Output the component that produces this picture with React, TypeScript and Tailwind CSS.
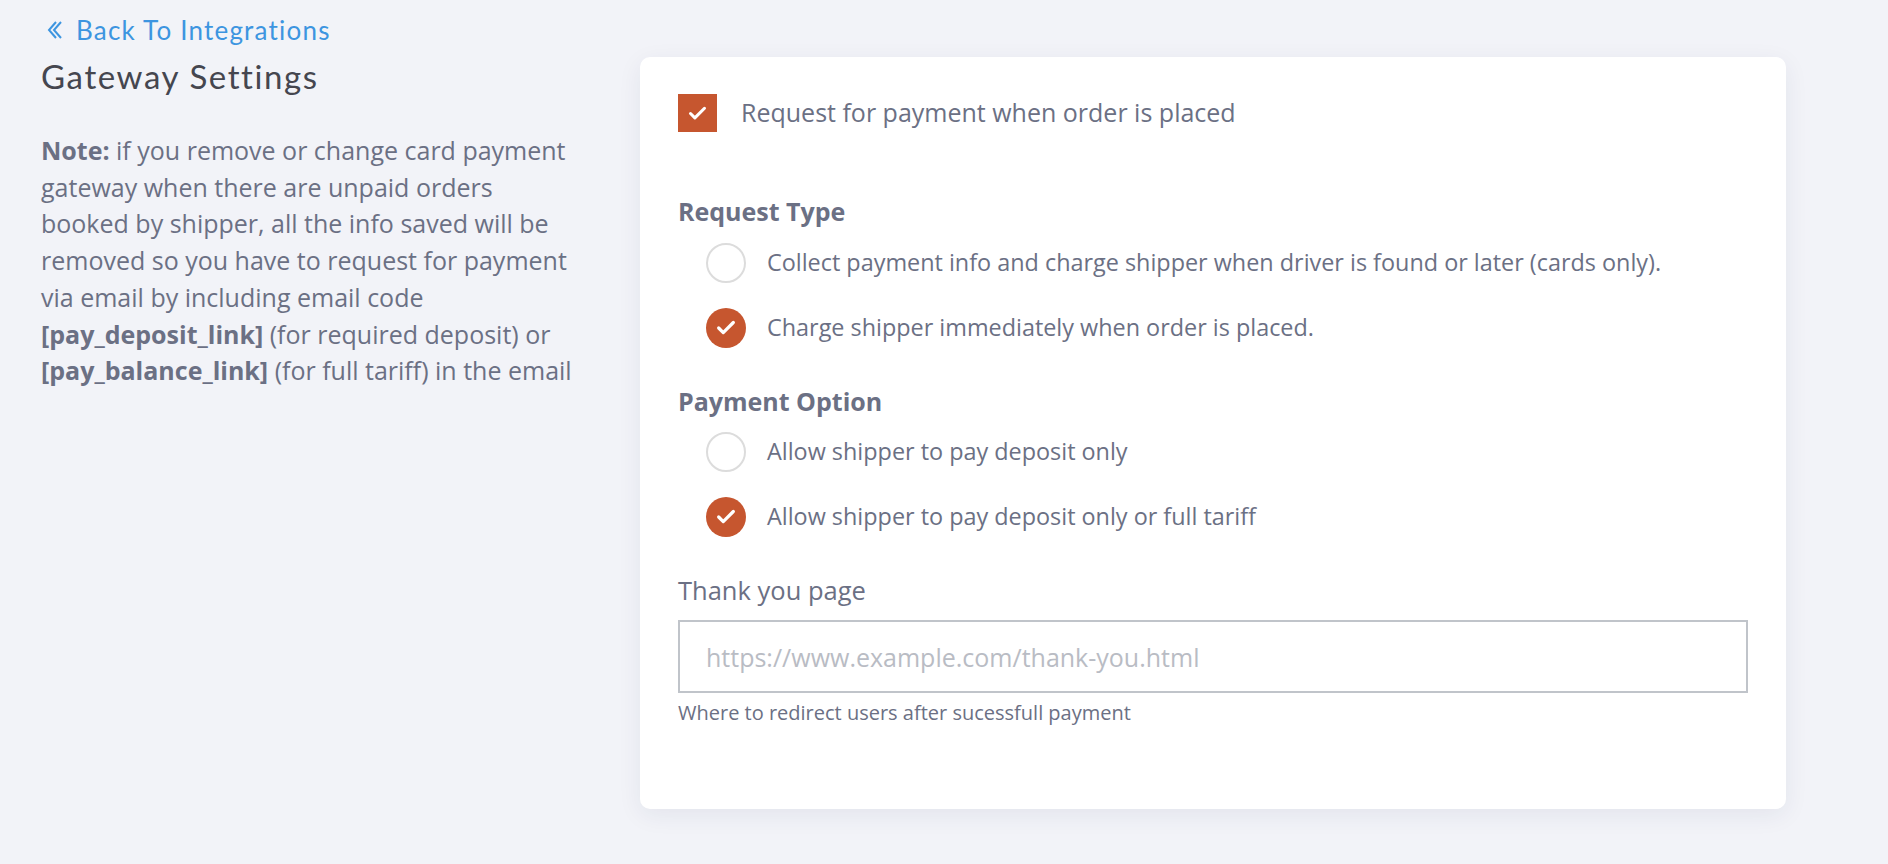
import { Check } from "lucide-react";

type Option = { label: string; checked: boolean };

const requestTypes: Option[] = [
  { label: "Collect payment info and charge shipper when driver is found or later (cards only).", checked: false },
  { label: "Charge shipper immediately when order is placed.", checked: true },
];

const paymentOptions: Option[] = [
  { label: "Allow shipper to pay deposit only", checked: false },
  { label: "Allow shipper to pay deposit only or full tariff", checked: true },
];

function Radio({ option, className }: { option: Option; className: string }) {
  return (
    <div className={`flex items-center h-[40px] pl-[28px] ${className}`}>
      {option.checked ? (
        <span className="w-[40px] h-[40px] rounded-full bg-[#c6562f] flex items-center justify-center shrink-0">
          <Check className="w-[22px] h-[22px] text-white" strokeWidth={3.5} />
        </span>
      ) : (
        <span className="w-[40px] h-[40px] rounded-full border-2 border-[#dcdcdc] bg-white shrink-0" />
      )}
      <span className="ml-[21px] text-[23.4px] text-[#6b7084]">{option.label}</span>
    </div>
  );
}

export default function App() {
  return (
    <div className="min-h-screen bg-[#f2f3f8] flex pl-[41px] font-['Open_Sans',sans-serif]">
      {/* Left column */}
      <div className="w-[560px] shrink-0 pt-[14px]">
        <a href="#" className="flex items-center h-[32px] leading-[32px] ml-[6px] text-[#3d95e0] text-[26px] tracking-[1.2px] font-['Lato',sans-serif]">
          <svg width="18" height="20" viewBox="0 0 18 20" fill="none" stroke="currentColor" strokeWidth="2" strokeLinejoin="miter">
            <polyline points="9,2 2,10 9,18" />
            <polyline points="14,2 7,10 14,18" />
          </svg>
          <span className="ml-[11px]">Back To Integrations</span>
        </a>
        <h1 className="mt-[10px] text-[33px] leading-[40px] tracking-[1.6px] text-[#45464f] font-['Lato',sans-serif]">
          Gateway Settings
        </h1>
        <p className="mt-[36px] w-[545px] text-[25px] leading-[36.7px] text-[#6b7084]">
          <b className="font-bold">Note:</b> if you remove or change card payment gateway when there are unpaid orders
          booked by shipper, all the info saved will be removed so you have to request for payment via email by
          including email code <b className="font-bold">[pay_deposit_link]</b> (for required deposit) or{" "}
          <b className="font-bold">[pay_balance_link]</b> (for full tariff) in the email
        </p>
      </div>

      {/* Card */}
      <div className="ml-[39px] mt-[57px] w-[1146px] h-[752px] bg-white rounded-[10px] shadow-[0_6px_24px_rgba(30,40,80,0.07)] px-[38px] pt-[37px]">
        <label className="flex items-center h-[38px]">
          <span className="w-[39px] h-[38px] bg-[#c6562f] flex items-center justify-center shrink-0">
            <Check className="w-[21px] h-[21px] text-white" strokeWidth={3.5} />
          </span>
          <span className="ml-[24px] text-[25px] text-[#6b7084]">Request for payment when order is placed</span>
        </label>

        <h3 className="mt-[64px] h-[30px] leading-[30px] text-[25px] font-bold text-[#6b7084]">Request Type</h3>
        <Radio option={requestTypes[0]} className="mt-[17px]" />
        <Radio option={requestTypes[1]} className="mt-[25px]" />

        <h3 className="mt-[38px] h-[30px] leading-[30px] text-[25px] font-bold text-[#6b7084]">Payment Option</h3>
        <Radio option={paymentOptions[0]} className="mt-[16px]" />
        <Radio option={paymentOptions[1]} className="mt-[25px]" />

        <div className="mt-[38px] h-[30px] leading-[30px] text-[25.5px] text-[#6b7084]">Thank you page</div>
        <input
          type="text"
          placeholder="https://www.example.com/thank-you.html"
          className="mt-[15px] w-full h-[73px] border-2 border-[#c0c4ca] px-[26px] text-[25px] text-[#6b7084] placeholder:text-[#b9bcc4] outline-none"
        />
        <div className="mt-[9px] h-[22px] leading-[22px] text-[20px] text-[#6b7084]">
          Where to redirect users after sucessfull payment
        </div>
      </div>
    </div>
  );
}
